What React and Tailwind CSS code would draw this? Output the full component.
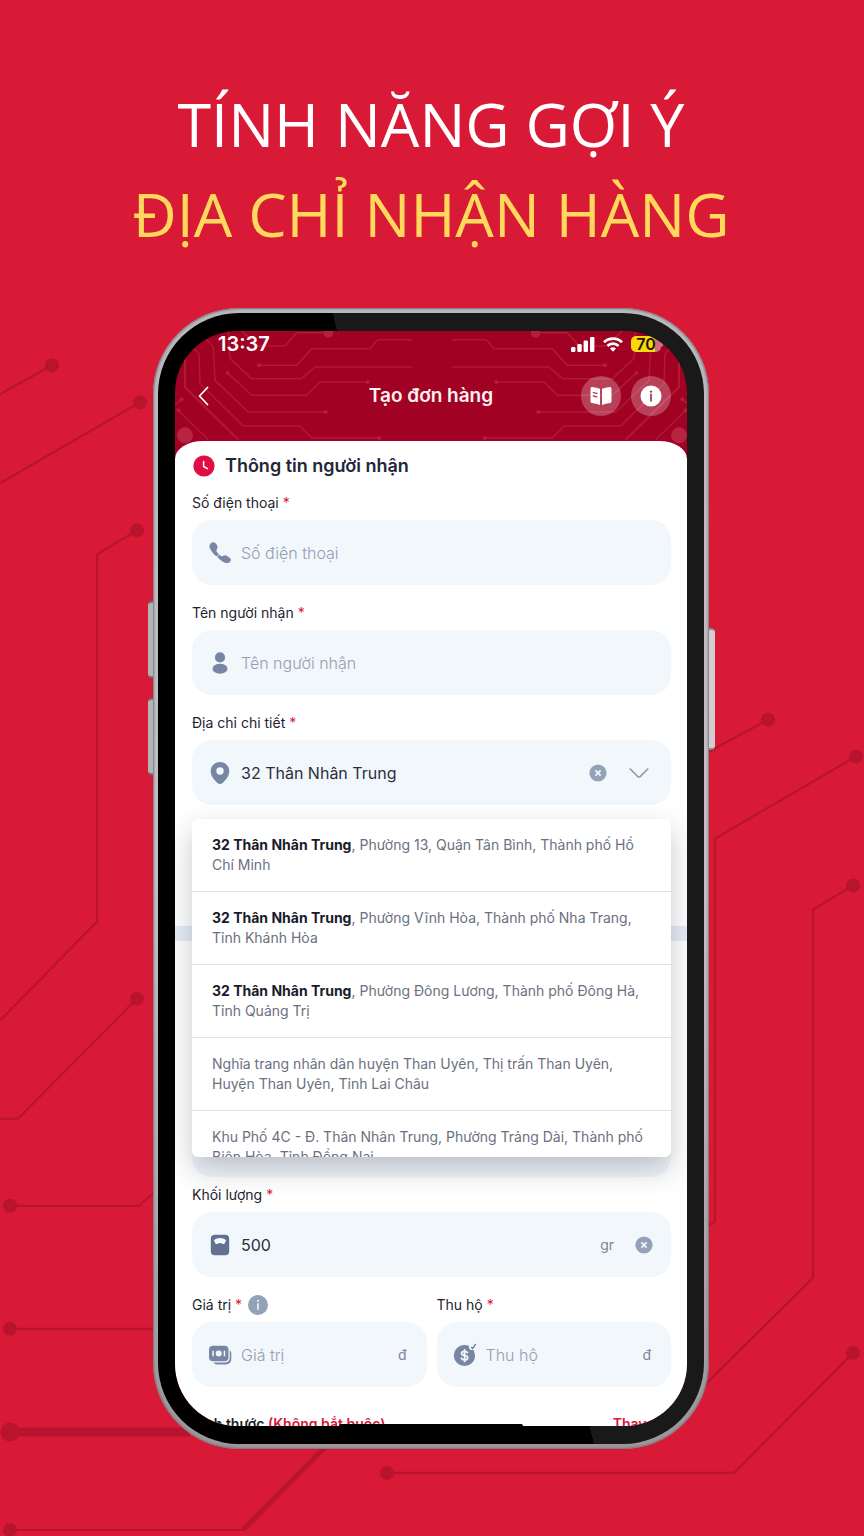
import React from "react";

const RED = "#b8142e";

function BackgroundCircuit() {
  const dots = [
    [52, 365], [140, 402], [137, 530], [137, 998], [10, 1205], [10, 1328],
    [10, 1529], [387, 1472], [768, 719], [856, 756], [853, 885], [853, 1352],
  ];
  return (
    <svg
      className="absolute inset-0 h-full w-full"
      viewBox="0 0 864 1536"
      preserveAspectRatio="none"
      fill="none"
      stroke={RED}
      strokeWidth="2.2"
      aria-hidden="true"
    >
      <path d="M0 394 52 365M0 483 140 402M137 530 97 554V921L0 1020M137 998 18 1118H0" />
      <path d="M10 1205H139L156 1190M10 1328H160" />
      <path d="M10 1431H190" strokeWidth="9" />
      <path d="M10 1529H243" />
      <path d="M243 1529 325 1446" strokeWidth="5" />
      <path d="M387 1472H734L853 1352" />
      <path d="M700 756 768 719M856 756 715 838V1220L700 1233M853 885 813 909V1277L705 1384" />
      <g fill={RED} stroke="none">
        {dots.map(([x, y]) => (
          <circle key={`${x}-${y}`} cx={x} cy={y} r="7" />
        ))}
        <circle cx="10" cy="1431" r="9.5" />
      </g>
    </svg>
  );
}

function HeaderTraces() {
  return (
    <g>
      <path d="M800 118H698L675 145H500L455 195H342M535 97H455L420 137H340L290 92M800 200H510L470 235H320L255 175 250 92M668 245H525L485 285H320L248 218M542 335H310L210 240 205 140 160 92M703 413H500L465 377H295L165 250 162 160 110 110M190 418 100 330M110 297 90 314" />
      <path d="M280 418 120 260V170" strokeWidth="6" />
      <g fill="#b51d38" stroke="none">
        <circle cx="342" cy="195" r="6" />
        <circle cx="668" cy="245" r="6" />
        <circle cx="248" cy="218" r="6" />
        <circle cx="542" cy="335" r="6" />
        <circle cx="703" cy="413" r="6" />
        <circle cx="100" cy="330" r="6" />
        <circle cx="110" cy="297" r="6" />
        <circle cx="550" cy="97" r="15" />
        <circle cx="120" cy="405" r="24" fill="#b92342" />
      </g>
    </g>
  );
}

function HeaderCircuit() {
  return (
    <svg
      className="absolute inset-x-0 top-0 h-[130px] w-full"
      viewBox="90 92 1536 390"
      preserveAspectRatio="xMidYMin slice"
      fill="none"
      stroke="#b01a34"
      strokeWidth="4.5"
      aria-hidden="true"
    >
      <HeaderTraces />
      <g transform="translate(1722 0) scale(-1 1)">
        <HeaderTraces />
      </g>
    </svg>
  );
}

function StatusBar() {
  return (
    <div className="flex h-[26px] items-center justify-between pr-6 pl-[43px]">
      <span className="text-xl leading-6 font-semibold text-white">13:37</span>
      <div className="flex items-center gap-2">
        <svg className="h-[15px] w-6" viewBox="0 0 24 15" fill="#fff" aria-hidden="true">
          <rect x="0" y="10" width="4.4" height="5" rx="1.2" />
          <rect x="6.3" y="7" width="4.4" height="8" rx="1.2" />
          <rect x="12.6" y="3.5" width="4.4" height="11.5" rx="1.2" />
          <rect x="19" y="0" width="4.4" height="15" rx="1.2" />
        </svg>
        <svg className="h-[15px] w-5" viewBox="0 0 20 15" fill="none" stroke="#fff" strokeWidth="2.7" aria-hidden="true">
          <path d="M1 5.2C6 .3 14 .3 19 5.2" />
          <path d="M4.4 9C7.6 5.9 12.4 5.9 15.6 9" />
          <path d="M7 11.4C8.8 9.9 11.2 9.9 13 11.4L10 14.8Z" fill="#fff" stroke="none" />
        </svg>
        <div className="flex items-center">
          <span className="flex h-4 w-[30px] items-center justify-center rounded-[5px] bg-linear-to-r from-[#f9d70b] from-80% to-[#cf6f86] to-80% text-base leading-4 font-semibold text-[#1b1605]">
            70
          </span>
          <span className="h-[5px] w-0.5 rounded-r-full bg-[#cf6f86]" />
        </div>
      </div>
    </div>
  );
}

function NavBar() {
  return (
    <div className="grid h-[78px] grid-cols-[1fr_auto_1fr] items-center px-4">
      <button type="button" aria-label="Quay lại" className="w-fit px-1.5">
        <svg className="h-5 w-3" viewBox="0 0 12 20" fill="none" stroke="#fff" strokeWidth="1.8" strokeLinecap="round" strokeLinejoin="round">
          <path d="M10.500 1.500 2.500 10l8 8.500" />
        </svg>
      </button>
      <h2 className="text-[19px] leading-7 font-semibold text-[#fdf0f2]">Tạo đơn hàng</h2>
      <div className="flex justify-end gap-2.5">
        <button type="button" aria-label="Hướng dẫn" className="flex size-10 items-center justify-center rounded-full bg-white/25">
          <svg className="size-[22px]" viewBox="0 0 22 22" fill="#fff">
            <path d="M.5 3.500Q.5 1.800 2.200 2 6.600 2.400 10 3.800V20Q6.500 18.400 1.900 18.100.5 18 .5 16.600Z" />
            <path d="M21.500 3.500Q21.500 1.800 19.800 2 15.400 2.400 12 3.800V20Q15.500 18.400 20.100 18.100 21.500 18 21.500 16.600Z" />
            <path d="M3.300 7.600l3.700.8M3.300 11l3.700.8" stroke="#b03a52" strokeWidth="1.300" strokeLinecap="round" />
          </svg>
        </button>
        <button type="button" aria-label="Thông tin" className="flex size-10 items-center justify-center rounded-full bg-white/25">
          <svg className="size-[22px]" viewBox="0 0 22 22">
            <circle cx="11" cy="11" r="10.500" fill="#fff" />
            <circle cx="11" cy="6.600" r="1.200" fill="#a84055" />
            <path d="M11 9.500V15.800" stroke="#a84055" strokeWidth="1.800" strokeLinecap="round" />
          </svg>
        </button>
      </div>
    </div>
  );
}

const icons = {
  phone: (
    <>
      <path d="M2.800 2.600C4 1 6.200.9 7.500 2.300 9.300 4.300 10.500 6.600 8.700 8.400 8.100 9 8.300 9.900 9 11L10.800 13.200 8.700 15.600C5 12.500 2.600 9.400 1.600 6.400 1.200 5 1.700 3.800 2.800 2.600Z" />
      <path d="M11.300 13.600 9.300 16.100C11.500 18.600 14 20.700 17 21.700 19.500 22.500 22 21.500 22.800 19.400 23.400 17.600 20.500 15.500 18 14.500 15.500 13.700 14.500 16 13 15.200Z" />
    </>
  ),
  user: (
    <>
      <circle cx="12" cy="6.400" r="5.100" />
      <ellipse cx="12" cy="17.700" rx="7.500" ry="5" />
    </>
  ),
  pin: (
    <path
      fillRule="evenodd"
      d="M12 1C6.800 1 2.700 5 2.700 10.100c0 4.400 3 8.800 6.800 11.900 1.500 1.200 3.500 1.200 5 0 3.800-3.100 6.800-7.500 6.800-11.900C21.300 5 17.200 1 12 1Zm0 12.700a3.700 3.700 0 1 1 0-7.400 3.700 3.700 0 0 1 0 7.400Z"
    />
  ),
  scale: (
    <path
      fillRule="evenodd"
      d="M7 1.700h10q4.200 0 4.200 4.200v12.400q0 4-4.200 4H7q-4.200 0-4.200-4V5.900Q2.800 1.700 7 1.700ZM12 5C9.200 5 6.800 5.900 5.800 7.500l2 3.400c1 .3 1.700 0 2.200-.5q1.900-1 4 0c.5.5 1.200.8 2.200.5l2-3.400C17.200 5.900 14.800 5 12 5Z"
      className="fill-[#62718f]"
    />
  ),
  money: (
    <>
      <path
        fillRule="evenodd"
        d="M5 2.700h11.500q4 0 4 4v7.600q0 4-4 4H5q-4 0-4-4V6.700q0-4 4-4ZM10.700 7.500a3 3 0 1 0 0 6 3 3 0 0 0 0-6ZM4.300 7.700v5.600h1.500V7.700Zm11.400 0v5.600h1.500V7.700Z"
      />
      <path d="M21.800 7.500v7c0 3.300-2 5-5 5H5.500c.7 1.300 2 2 4 2H17c4.200 0 6.300-2.200 6.300-6V10.500c0-1.500-.5-2.500-1.500-3Z" />
    </>
  ),
  coin: (
    <>
      <circle cx="11.500" cy="12.500" r="10.600" />
      <path d="M16 0h8v7h-6.500l-1.500-2z" className="fill-[#f2f7fc]" />
      <path d="M18.300 4 19.600 5.500 22.800 1" fill="none" stroke="#5d6b86" strokeWidth="1.200" />
      <path d="M14.500 9.600C13.900 8.600 12.900 8.300 11.600 8.300 9.800 8.300 8.600 9.100 8.600 10.400 8.600 13.300 14.700 11.600 14.700 14.700 14.700 16 13.400 16.900 11.600 16.900 10.100 16.900 8.900 16.400 8.300 15.200M11.600 6.800V18.400" fill="none" stroke="#f2f7fc" strokeWidth="1.800" strokeLinecap="round" />
    </>
  ),
};

function ClearButton({ label }) {
  return (
    <button type="button" aria-label={label} className="shrink-0">
      <svg className="size-[18px]" viewBox="0 0 18 18">
        <circle cx="9" cy="9" r="8.600" fill="#94a2b8" />
        <path d="M6.400 6.400 11.600 11.600M11.600 6.400 6.400 11.600" stroke="#f2f7fc" strokeWidth="1.700" />
      </svg>
    </button>
  );
}

function Field({ id, label, icon, placeholder, value, trailing, hint, children }) {
  return (
    <div className="relative min-w-0 flex-1">
      <div className="flex h-5 items-center gap-1.5">
        <label htmlFor={id} className="text-sm leading-5 text-[#1f2230]">
          {label} <span className="text-[#e0173c]">*</span>
        </label>
        {hint}
      </div>
      <div className="mt-[7px] flex h-[65px] items-center gap-[9px] rounded-[20px] bg-[#f2f7fc] px-4">
        <svg className="size-6 shrink-0" viewBox="0 0 24 24" fill="#7786a3" aria-hidden="true">
          {icons[icon]}
        </svg>
        <input
          id={id}
          type="text"
          placeholder={placeholder}
          defaultValue={value}
          className="w-0 min-w-0 flex-1 bg-transparent text-base leading-6 text-[#2b2f3c] outline-none placeholder:font-light placeholder:text-[#929eb3]"
        />
        {trailing}
      </div>
      {children}
    </div>
  );
}

const suggestions = [
  ["32 Thân Nhân Trung", ", Phường 13, Quận Tân Bình, Thành phố Hồ Chí Minh"],
  ["32 Thân Nhân Trung", ", Phường Vĩnh Hòa, Thành phố Nha Trang, Tỉnh Khánh Hòa"],
  ["32 Thân Nhân Trung", ", Phường Đông Lương, Thành phố Đông Hà, Tỉnh Quảng Trị"],
  ["", "Nghĩa trang nhân dân huyện Than Uyên, Thị trấn Than Uyên, Huyện Than Uyên, Tỉnh Lai Châu"],
  ["", "Khu Phố 4C - Đ. Thân Nhân Trung, Phường Trảng Dài, Thành phố Biên Hòa, Tỉnh Đồng Nai"],
];

function Suggestions() {
  return (
    <ul className="absolute inset-x-0 top-full z-10 mt-3.5 h-[338px] overflow-hidden rounded-md bg-white shadow-[0_12px_28px_rgba(30,40,50,0.26)]">
      {suggestions.map(([match, rest]) => (
        <li key={match + rest} className="border-b border-[#dfe1e5]">
          <button type="button" className="block w-full px-5 py-4 text-left text-sm leading-5 text-[#6b7080]">
            {match && <b className="font-bold text-[#191b2b]">{match}</b>}
            {rest}
          </button>
        </li>
      ))}
    </ul>
  );
}

function Form() {
  return (
    <form className="relative rounded-t-[28px_18px] bg-white pt-[11px]">
      <div className="pr-4 pl-[17px]">
        <h3 className="flex h-7 items-center gap-2.5 text-lg leading-7 font-semibold text-[#23263a]">
          <svg className="ml-px size-[22px]" viewBox="0 0 22 22" aria-hidden="true">
            <circle cx="11" cy="11" r="10.600" fill="#e30d45" />
            <path d="M10.600 6.500V11.500L14.400 13.700" fill="none" stroke="#fff" strokeWidth="1.500" strokeLinecap="round" strokeLinejoin="round" />
          </svg>
          Thông tin người nhận
        </h3>
        <div className="mt-[13px] flex flex-col gap-[18px]">
          <Field id="phone" label="Số điện thoại" icon="phone" placeholder="Số điện thoại" />
          <Field id="name" label="Tên người nhận" icon="user" placeholder="Tên người nhận" />
          <Field
            id="address"
            label="Địa chỉ chi tiết"
            icon="pin"
            value="32 Thân Nhân Trung"
            trailing={
              <div className="flex items-center gap-[22px] pr-1.5">
                <ClearButton label="Xóa địa chỉ" />
                <button type="button" aria-label="Mở gợi ý">
                  <svg className="h-3 w-5" viewBox="0 0 20 12" fill="none" stroke="#929eb0" strokeWidth="1.700" strokeLinecap="round" strokeLinejoin="round">
                    <path d="M1.200 2 8.600 9.300Q10 10.600 11.400 9.300L18.800 2" />
                  </svg>
                </button>
              </div>
            }
          >
            <Suggestions />
          </Field>
        </div>
      </div>

      <div className="mt-[121px] h-[15px] bg-[#e6edf6]" />

      <div className="pt-[171px] pr-4 pl-[17px]">
        <div className="h-[65px] rounded-[20px] bg-[#f2f7fc]" />
        <div className="mt-2 flex flex-col gap-[18px]">
          <Field
            id="weight"
            label="Khối lượng"
            icon="scale"
            value="500"
            trailing={
              <div className="flex items-center gap-[21px] pr-0.5 text-sm text-[#7c869a]">
                gr
                <ClearButton label="Xóa khối lượng" />
              </div>
            }
          />
          <div className="flex gap-2.5">
            <Field
              id="value"
              label="Giá trị"
              icon="money"
              placeholder="Giá trị"
              trailing={<span className="pr-1 text-sm text-[#7c869a]">đ</span>}
              hint={
                <svg className="size-5" viewBox="0 0 20 20" aria-hidden="true">
                  <circle cx="10" cy="10" r="10" fill="#94a2b8" />
                  <circle cx="10" cy="5.800" r="1" fill="#fff" />
                  <path d="M10 8.300V14.800" stroke="#fff" strokeWidth="1.400" />
                </svg>
              }
            />
            <Field
              id="cod"
              label="Thu hộ"
              icon="coin"
              placeholder="Thu hộ"
              trailing={<span className="pr-1 text-sm text-[#7c869a]">đ</span>}
            />
          </div>
        </div>
        <div className="mt-[27px] flex h-3 items-start justify-between overflow-hidden text-sm leading-5 font-semibold text-[#191b2b]">
          <p>
            Kích thước <span className="text-[#d8173a]">(Không bắt buộc)</span>
          </p>
          <button type="button" className="text-[#d8173a]">Thay đổi</button>
        </div>
      </div>
    </form>
  );
}

function Phone() {
  return (
    <div className="relative w-full max-w-[556px]">
      <div className="absolute top-[293px] -left-[5px] h-[77px] w-3 rounded-l-sm border-y-2 border-[#77767a] bg-[#b3b4b8]" />
      <div className="absolute top-[390px] -left-[5px] h-[77px] w-3 rounded-l-sm border-y-2 border-[#77767a] bg-[#b3b4b8]" />
      <div className="absolute top-[320px] -right-[6px] h-[122px] w-3 rounded-r-sm border-y-2 border-[#8a8589] bg-[#d5ccd2]" />
      <div className="relative rounded-[86px] bg-linear-to-b from-[#b9b8bc] via-[#c2bfc5] to-[#9d979c] p-[5px] shadow-[inset_0_0_2px_1px_#77757a]">
        <div className="rounded-[81px] bg-[linear-gradient(77deg,#000_54%,#191919_54%)] px-[17px] py-[18px]">
          <div className="relative overflow-hidden rounded-[62px] bg-[#a10122]">
            <HeaderCircuit />
            <header className="relative pb-1.5">
              <StatusBar />
              <NavBar />
            </header>
            <Form />
            <div className="absolute bottom-0 left-1/2 h-0.5 w-[184px] -translate-x-1/2 rounded-t-sm bg-black" />
          </div>
        </div>
      </div>
    </div>
  );
}

export default function App() {
  return (
    <main className="relative flex min-h-screen flex-col items-center overflow-hidden bg-[#d91a37] pr-0.5 pb-[88px] font-[Inter,'Noto_Sans',sans-serif]">
      <BackgroundCircuit />
      <h1 className="relative pt-[79px] text-center font-['Open_Sans','Noto_Sans',sans-serif] text-[61px] leading-[90px] font-medium text-white">
        TÍNH NĂNG GỢI Ý
        <span className="block text-[#ffd95c]">ĐỊA CHỈ NHẬN HÀNG</span>
      </h1>
      <div className="mt-[49px] flex w-full justify-center">
        <Phone />
      </div>
    </main>
  );
}
